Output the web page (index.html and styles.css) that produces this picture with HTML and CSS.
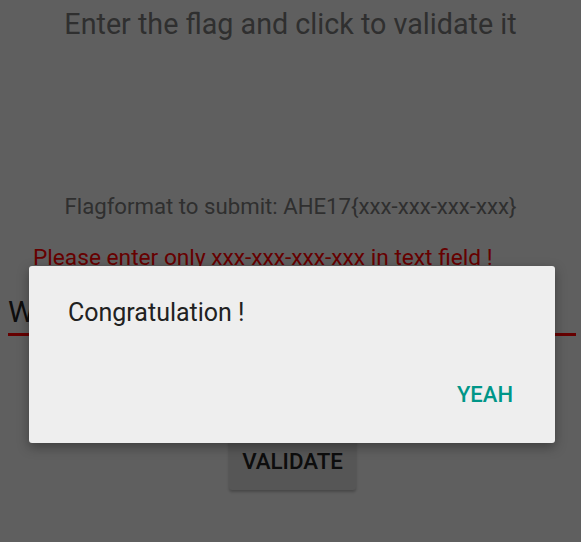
FILE: index.html
```html
<!DOCTYPE html>
<html>
<head>
<meta charset="utf-8">
<link rel="stylesheet" href="styles.css">
</head>
<body>
<div class="screen">
  <h1 class="title">Enter the flag and click to validate it</h1>
  <p class="format">Flagformat to submit: AHE17{xxx-xxx-xxx-xxx}</p>
  <p class="error">Please enter only xxx-xxx-xxx-xxx in text field !</p>
  <div class="field"><span class="field-text">W</span></div>
  <div class="actions"><button class="validate">VALIDATE</button></div>
</div>
<div class="scrim"></div>
<div class="dialog">
  <p class="dialog-msg">Congratulation !</p>
  <div class="dialog-actions"><button class="dialog-btn">YEAH</button></div>
</div>
</body>
</html>
```

FILE: styles.css
```css
html, body {
  margin: 0;
  padding: 0;
  width: 581px;
  height: 542px;
  overflow: hidden;
  background: #eeeeee;
  font-family: Roboto, "Noto Sans", sans-serif;
}

.screen {
  display: flex;
  flex-direction: column;
  height: 542px;
}

.title {
  margin: 6px 0 0;
  text-align: center;
  font-size: 28.7px;
  font-weight: 400;
  line-height: 36px;
  color: #767676;
  white-space: nowrap;
}

.format {
  margin: 150px 0 0;
  text-align: center;
  font-size: 22.2px;
  line-height: 28px;
  color: #767676;
  white-space: nowrap;
}

.error {
  margin: 23px 0 0;
  padding-left: 33px;
  font-size: 22.7px;
  line-height: 30px;
  color: #ff0000;
  white-space: nowrap;
}

.field {
  margin: 22px 5px 0 8px;
  height: 38px;
  border-bottom: 3px solid #ff0000;
}

.field-text {
  display: block;
  font-size: 30px;
  line-height: 34px;
  color: #212121;
}

.actions {
  display: flex;
  justify-content: center;
  margin-top: 102px;
  padding-left: 4px;
}

.validate {
  width: 127px;
  height: 52px;
  box-sizing: border-box;
  border: none;
  border-radius: 3px;
  background: #d6d6d6;
  box-shadow: 0 2px 3px rgba(0,0,0,0.25);
  font-family: Roboto, sans-serif;
  font-size: 22.3px;
  font-weight: 500;
  line-height: 26px;
  color: #212121;
  padding: 10px 0 16px;
}

.scrim {
  position: absolute;
  inset: 0;
  background: rgba(0,0,0,0.6);
}

.dialog {
  position: absolute;
  left: 29px;
  top: 266px;
  width: 526px;
  height: 177px;
  box-sizing: border-box;
  background: #eeeeee;
  border-radius: 3px;
  box-shadow: 0 4px 12px rgba(0,0,0,0.35);
  display: flex;
  flex-direction: column;
  padding: 32px 42px 0 39px;
}

.dialog-msg {
  margin: 0;
  font-size: 25px;
  line-height: 30px;
  color: #212121;
}

.dialog-actions {
  display: flex;
  justify-content: flex-end;
  margin-top: 52px;
}

.dialog-btn {
  border: none;
  background: transparent;
  padding: 0;
  font-family: Roboto, sans-serif;
  font-size: 22px;
  font-weight: 500;
  color: #009688;
  line-height: 30px;
}
```
